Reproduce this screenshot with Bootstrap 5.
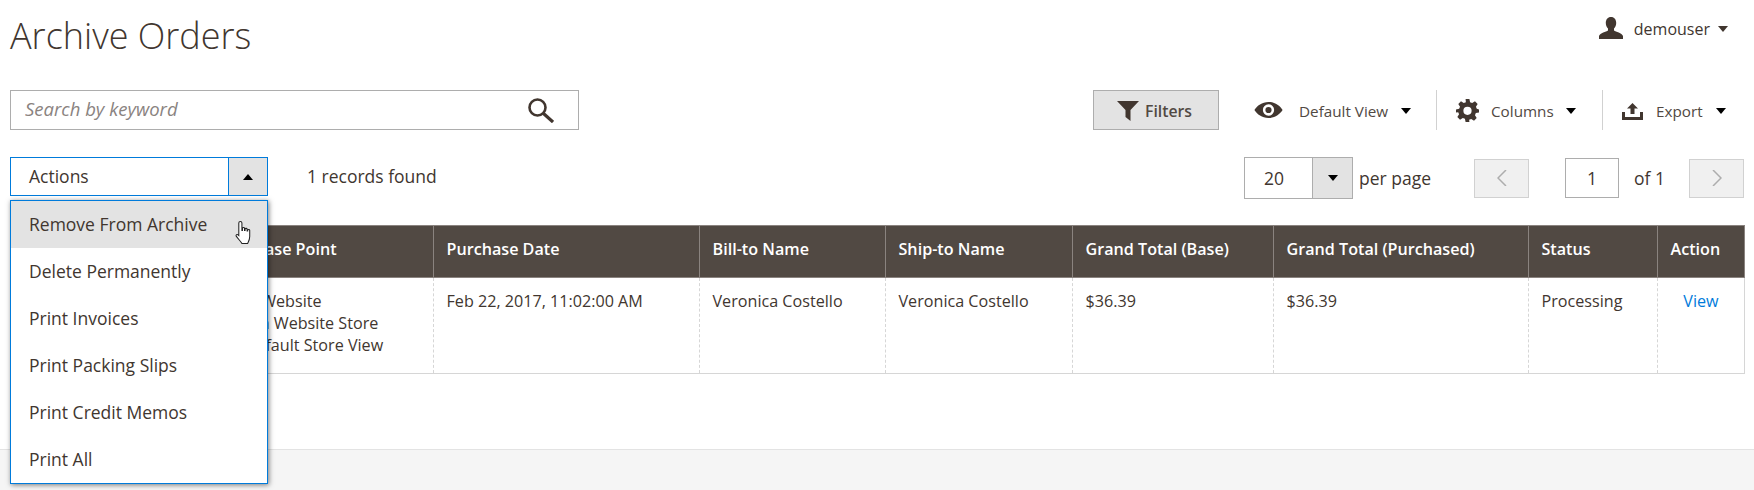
<!DOCTYPE html>
<html lang="en">
<head>
<meta charset="utf-8">
<title>Archive Orders</title>
<link href="https://cdn.jsdelivr.net/npm/bootstrap@5.3.0/dist/css/bootstrap.min.css" rel="stylesheet">
<style>
html,body{height:100%}
body{font-family:"Open Sans","Noto Sans",sans-serif;font-size:17.5px;color:#41362f;background:#fff;overflow:hidden;display:flex;flex-direction:column}
.shell{padding:0 10px;flex:1 0 auto;position:relative}
.page-ttl{font-size:36px;font-weight:300;line-height:36px;margin:0;padding-top:18px;height:90px}
.usr{height:0;position:relative}
.usr-in{position:absolute;right:16px;top:17px;font-size:16px;line-height:24px}
.usr-in svg{margin-right:11px;margin-top:-2px}
.caret-d{display:inline-block;width:0;height:0;border-left:5px solid transparent;border-right:5px solid transparent;border-top:6px solid #000}
.caret-u{display:inline-block;width:0;height:0;border-left:5px solid transparent;border-right:5px solid transparent;border-bottom:6px solid #000}
.usr-in .caret-d{margin-left:8px;border-top-color:#41362f}
.row-one{height:40px}
.srch{width:569px;height:40px;border:1px solid #adadad;padding:0 24px 0 14px}
.srch input{border:0;outline:0;flex:1;font-style:italic;font-size:18.5px;color:#41362f;font-family:inherit;background:transparent;min-width:0;padding:0 0 3px}
.srch input::placeholder{color:#8a837f;opacity:1}
.flt{width:126px;height:40px;background:#e3e3e3;border:1px solid #adadad;border-radius:0;font-size:15.75px;font-weight:600;color:#514943;padding:0 3px 0 0}
.flt svg{margin-right:6px;margin-top:1px}
.flt-l{padding-top:3px}
.tool{height:40px;font-size:15.25px;color:#514943;flex:0 0 auto;white-space:nowrap}
.tool .lbl{padding-top:2px}
.tool .caret-d{margin-top:2px}
.tool-view{width:217px;padding-left:35px}
.tool-view .lbl{margin-left:16px}
.tool-view .caret-d{margin-left:13px}
.tool-cols{width:165px;padding-left:19px}
.tool-cols svg{margin-top:1px}
.tool-cols .lbl{margin-left:12px}
.tool-cols .caret-d{margin-left:12px}
.tool-exp{width:141px;padding-left:19px}
.tool-exp svg{margin-top:2px}
.tool-exp .lbl{margin-left:13px}
.tool-exp .caret-d{margin-left:13px}
.sepa{width:1px;height:40px;background:#d1d1d1}
.row-two{margin-top:27px;height:42px}
.act{width:258px;height:39px;border:1px solid #007bdb;background:#fff;align-self:flex-start}
.act-l{flex:1;padding-left:18px;line-height:37px}
.act-t{width:39px;background:#e3e3e3;border-left:1px solid #007bdb}
.menu-a{position:absolute;left:10px;top:200px;width:258px;height:284px;border:1px solid #007bdb;background:#fff;box-shadow:1px 1px 5px rgba(0,0,0,.5);z-index:5;list-style:none;margin:0;padding:0}
.menu-a li{height:47px;line-height:47px;padding-left:18px;white-space:nowrap}
.menu-a li.on{background:#e3e3e3}
.hand{position:absolute;left:234px;top:220px;z-index:6}
.rec{margin-left:39px;align-self:flex-start;line-height:39px}
.pp{height:42px;width:109px;border:1px solid #adadad}
.pp-v{flex:1;padding-left:19px}
.pp-t{width:40px;background:#e3e3e3;border-left:1px solid #adadad}
.perp{width:121px;padding-left:6px}
.pg-b{width:55px;height:39px;background:#f0f0f0;border:1px solid #d1d1d1}
.pg-i{width:54px;height:40px;border:1px solid #adadad;margin-left:36px}
.ofn{width:70px;padding-left:15px}
.grid-t{width:1734px;margin-top:26px;border-collapse:collapse;table-layout:fixed}
.grid-t th{background:#514943;color:#fff;font-weight:600;font-size:16.15px;height:52px;padding:0 12.5px 4px;border:1px solid #8a837f;white-space:nowrap}
.grid-t td{font-size:16.15px;line-height:22px;height:96px;padding:12px 12.5px 10px;vertical-align:top;border-left:1px dashed #d6d6d6;border-right:1px dashed #d6d6d6;border-bottom:1px solid #d6d6d6;white-space:nowrap}
.grid-t td:first-child{border-left:1px solid #d6d6d6}
.grid-t td:last-child{border-right:1px solid #d6d6d6}
.grid-t a{color:#007bdb;text-decoration:none}
.foot-s{flex:0 0 41px;background:#f5f5f5;border-top:1px solid #e3e3e3}
</style>
</head>
<body>
<div class="shell">
  <div class="usr"><div class="usr-in d-flex align-items-center">
    <svg width="24" height="22" viewBox="0 0 24 22" fill="#41362f"><path d="M12 0c3.300 0 5.200 2.600 5.200 6 0 2.400-1 4.400-2.200 5.600v1.900c1.700 1.200 8 2.300 9 5.500v3H0v-3c1-3.200 7.300-4.300 9-5.500v-1.900C7.800 10.400 6.800 8.400 6.800 6 6.800 2.600 8.700 0 12 0z"/></svg>
    <span>demouser</span><span class="caret-d"></span>
  </div></div>
  <h1 class="page-ttl">Archive Orders</h1>
  <div class="row-one d-flex align-items-center">
    <div class="srch d-flex align-items-center">
      <input type="text" placeholder="Search by keyword" aria-label="Search by keyword">
      <svg width="26" height="25" viewBox="0 0 26 25" fill="none" stroke="#41362f"><circle cx="9.500" cy="9.500" r="8" stroke-width="2.600"/><path d="M15.500 15.500L25 24" stroke-width="3.200"/></svg>
    </div>
    <button class="flt ms-auto d-flex align-items-center justify-content-center" type="button">
      <svg width="22" height="20" viewBox="0 0 22 20" fill="#41362f"><path d="M0 0h22l-8.500 9v11L8.500 16V9z"/></svg><span class="flt-l">Filters</span>
    </button>
    <div class="tool tool-view d-flex align-items-center">
      <svg width="29" height="16" viewBox="0 0 30 17" fill="#41362f"><path fill-rule="evenodd" d="M15 0C8 0 3 4 0 8.500 3 13 8 17 15 17s12-4 15-8.500C27 4 22 0 15 0zm0 14.500a6 6 0 1 1 0-12 6 6 0 0 1 0 12z"/><circle cx="15" cy="8.500" r="3.300"/></svg>
      <span class="lbl">Default View</span><span class="caret-d"></span>
    </div>
    <div class="sepa"></div>
    <div class="tool tool-cols d-flex align-items-center">
      <svg width="23" height="23" viewBox="0 0 24 24" fill="#41362f"><path fill-rule="evenodd" d="M10 0h4l.7 3.300 2.200.9 2.900-1.800 2.800 2.800-1.800 2.900.9 2.200L24 11v3l-3.300.7-.9 2.200 1.800 2.900-2.800 2.800-2.900-1.800-2.200.9L14 24h-4l-.7-3.300-2.200-.9-2.900 1.800-2.800-2.800 1.800-2.900-.9-2.200L0 14v-3l3.300-.7.9-2.200-1.800-2.900 2.800-2.800 2.900 1.800 2.200-.9zM12 8a4.300 4.300 0 1 0 0 8.600A4.300 4.300 0 0 0 12 8z"/></svg>
      <span class="lbl">Columns</span><span class="caret-d"></span>
    </div>
    <div class="sepa"></div>
    <div class="tool tool-exp d-flex align-items-center">
      <svg width="21" height="17" viewBox="0 0 21 17" fill="#41362f"><path d="M10.500 0L16 5.500h-3.500V11h-4V5.500H5zM0 9h3v5h15V9h3v8H0z"/></svg>
      <span class="lbl">Export</span><span class="caret-d"></span>
    </div>
  </div>
  <div class="row-two d-flex align-items-center">
    <div class="act d-flex">
      <div class="act-l">Actions</div>
      <div class="act-t d-flex align-items-center justify-content-center"><span class="caret-u"></span></div>
    </div>
    <div class="rec">1 records found</div>
    <div class="pp d-flex ms-auto">
      <div class="pp-v d-flex align-items-center">20</div>
      <div class="pp-t d-flex align-items-center justify-content-center"><span class="caret-d"></span></div>
    </div>
    <div class="perp">per page</div>
    <div class="pg-b d-flex align-items-center justify-content-center">
      <svg width="10" height="16" viewBox="0 0 10 16" fill="none" stroke="#adadad" stroke-width="1.500"><path d="M9 0L1 8l8 8"/></svg>
    </div>
    <div class="pg-i d-flex align-items-center justify-content-center">1</div>
    <div class="ofn">of 1</div>
    <div class="pg-b d-flex align-items-center justify-content-center">
      <svg width="10" height="16" viewBox="0 0 10 16" fill="none" stroke="#adadad" stroke-width="1.500"><path d="M1 0l8 8-8 8"/></svg>
    </div>
  </div>
  <table class="grid-t">
    <colgroup><col style="width:196px"><col style="width:227px"><col style="width:266px"><col style="width:186px"><col style="width:187px"><col style="width:201px"><col style="width:255px"><col style="width:129px"><col style="width:87px"></colgroup>
    <thead><tr><th></th><th>Purchase Point</th><th>Purchase Date</th><th>Bill-to Name</th><th>Ship-to Name</th><th>Grand Total (Base)</th><th>Grand Total (Purchased)</th><th>Status</th><th>Action</th></tr></thead>
    <tbody><tr><td></td><td>Main Website<br>&nbsp;&nbsp;&nbsp;Main Website Store<br>&nbsp;&nbsp;&nbsp;&nbsp;&nbsp;&nbsp;Default Store View</td><td>Feb 22, 2017, 11:02:00 AM</td><td>Veronica Costello</td><td>Veronica Costello</td><td>$36.39</td><td>$36.39</td><td>Processing</td><td class="text-center"><a href="#">View</a></td></tr></tbody>
  </table>
  <ul class="menu-a">
    <li class="on">Remove From Archive</li><li>Delete Permanently</li><li>Print Invoices</li><li>Print Packing Slips</li><li>Print Credit Memos</li><li>Print All</li>
  </ul>
  <svg class="hand" width="20" height="26" viewBox="0 0 18 25" fill="#fff" stroke="#222" stroke-width="1"><path d="M5.500 1.500c1 0 1.500.7 1.500 1.500v7h.5V8c0-1 2-1 2 0v2h.5V8.800c0-1 2-1 2 0v1.700h.5v-.7c0-1 2-1 2 0v6c0 3-1.200 5-2 6.700H7c-1-1.700-4-4.700-5.500-7-.6-1 .8-2.200 1.800-1.200L4 15V3c0-.8.500-1.500 1.500-1.500z"/></svg>
</div>
<div class="foot-s"></div>
</body>
</html>
